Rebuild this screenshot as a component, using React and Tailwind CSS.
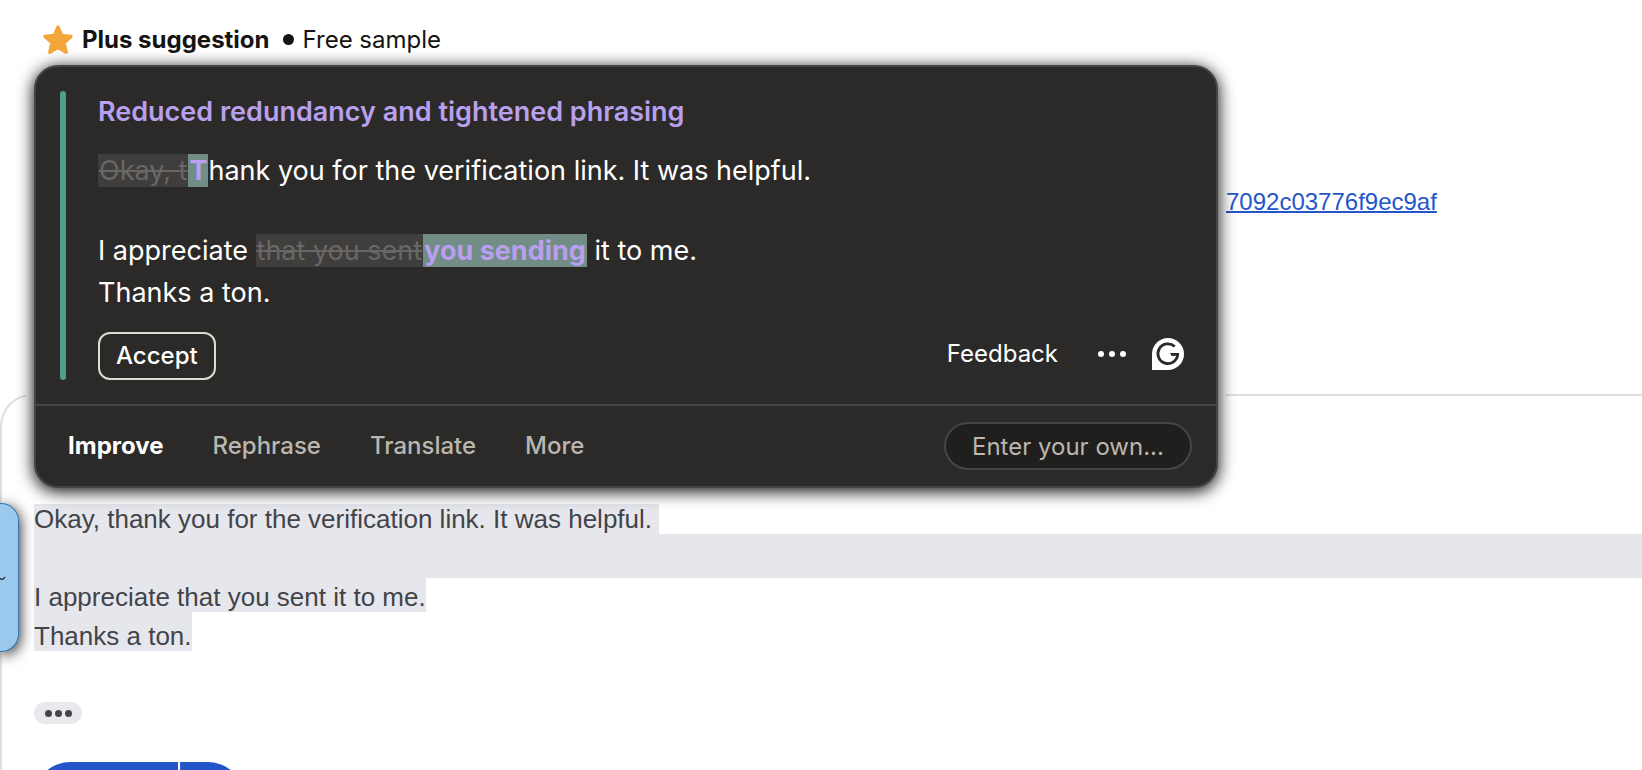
import React from "react";

const tabs = ["Improve", "Rephrase", "Translate", "More"];

const StarIcon = () => (
  <svg className="h-[30px] w-[30px]" viewBox="0 0 30 30" aria-hidden="true">
    <path
      d="M15 2 18.6 10.4 28 11.4 21 17.7 23.2 27.2 15 22.3 6.8 27.2 9 17.7 2 11.4 11.4 10.4Z"
      fill="#f3a63b"
      stroke="#f3a63b"
      strokeWidth="3.4"
      strokeLinejoin="round"
    />
  </svg>
);

const GrammarIcon = () => (
  <svg className="h-8 w-8" viewBox="0 0 32 32" aria-hidden="true">
    <path d="M16 0a16 16 0 1 1 0 32H0V16A16 16 0 0 1 16 0Z" fill="#fff" />
    <path
      d="M22.7 8.6A9.9 9.9 0 1 0 25.7 16.4H19"
      fill="none"
      stroke="#2b2a28"
      strokeWidth="2.8"
    />
    <path d="M20.6 15H17.8L20.2 17.8H22.6Z" fill="#2b2a28" />
  </svg>
);

const Dots = ({ className }) => (
  <span className={className}>
    <span className="rounded-full bg-current" />
    <span className="rounded-full bg-current" />
    <span className="rounded-full bg-current" />
  </span>
);

const Removed = ({ children }) => (
  <del className="bg-[#3f3e3c] px-px text-[#686765] decoration-2">
    {children}
  </del>
);

const Added = ({ children }) => (
  <ins className="bg-[#728c86] px-px font-bold text-[#b9a0ee] no-underline">
    {children}
  </ins>
);

const SuggestionCard = () => (
  <section className="rounded-[24px] border-2 border-[#464543] bg-[#2b2a28] text-white shadow-[0_3px_16px_1px_rgba(0,0,0,0.9)]">
    <div className="flex gap-8 px-6 pt-6 pb-6">
      <div className="w-[6px] shrink-0 rounded-full bg-[#519f8b]" />
      <div className="grow">
        <h2 className="text-[27px] leading-[42px] font-semibold text-[#b9a0ee]">
          Reduced redundancy and tightened phrasing
        </h2>
        <div className="mt-[17px] text-[27px] leading-[42px]">
          <p>
            <Removed>Okay, t</Removed>
            <Added>T</Added>hank you for the verification link. It was helpful.
          </p>
          <p className="mt-[38px]">
            I appreciate <Removed>that you sent</Removed>
            <Added>you sending</Added> it to me.
          </p>
          <p>Thanks a ton.</p>
        </div>
        <div className="mt-[18px] flex items-start justify-between">
          <button className="h-12 rounded-xl border-2 border-[#dddbd6] px-4 text-2xl font-medium">
            Accept
          </button>
          <div className="flex h-11 items-center pr-2">
            <button className="text-2xl">Feedback</button>
            <button aria-label="More options" className="ml-10">
              <Dots className="flex gap-[5px] *:h-[6px] *:w-[6px]" />
            </button>
            <button aria-label="Open assistant" className="ml-[26px]">
              <GrammarIcon />
            </button>
          </div>
        </div>
      </div>
    </div>
    <div className="flex items-center justify-between border-t-2 border-[#464543] py-4 pr-6 pl-8 text-2xl">
      <nav className="flex gap-[49px]">
        {tabs.map((tab, index) => (
          <button
            key={tab}
            className={
              index === 0 ? "font-bold text-white" : "font-medium text-[#bab7af]"
            }
          >
            {tab}
          </button>
        ))}
      </nav>
      <input
        type="text"
        aria-label="Enter your own prompt"
        placeholder="Enter your own..."
        className="h-12 w-[248px] rounded-full border-2 border-[#464543] bg-[#201f1d] px-[26px] placeholder:text-[#bab7af]"
      />
    </div>
  </section>
);

const App = () => {
  return (
    <div className="relative flex h-screen flex-col overflow-hidden bg-white font-['Liberation_Sans',Arial,sans-serif]">
      {/* Message above the reply box */}
      <div className="h-[394px] shrink-0 pt-[186px] pl-[1226px] text-2xl">
        <a href="#link" className="text-[#2456c9] underline decoration-2">
          7092c03776f9ec9af
        </a>
      </div>

      {/* Reply box */}
      <main className="grow rounded-tl-[32px] border-t-2 border-l-2 border-[#dfdfdf] pt-[108px] pl-8">
        <div className="text-[26px] leading-[30px] text-[#434449]">
          <p className="w-fit bg-[#e6e7ed] pr-[7px]">
            Okay, thank you for the verification link. It was helpful.
          </p>
          <div className="h-11 bg-[#e6e7ed]" />
          <p className="w-fit bg-[#e6e7ed] pt-1">
            I appreciate that you sent it to me.
          </p>
          <p className="w-fit bg-[#e6e7ed] pt-[9px]">Thanks a ton.</p>
        </div>
        <button
          aria-label="Show trimmed content"
          className="mt-[51px] flex h-[22px] w-12 items-center justify-center rounded-full bg-[#e8e9ed] text-[#434449]"
        >
          <Dots className="flex gap-[3px] *:h-[7px] *:w-[7px]" />
        </button>
        <div className="mt-[38px] flex gap-[2px]">
          <button
            aria-label="Send"
            className="h-[72px] w-36 rounded-l-full bg-[#2456c9]"
          />
          <button
            aria-label="More send options"
            className="h-[72px] w-16 rounded-r-full bg-[#2456c9]"
          />
        </div>
      </main>

      {/* Side tab peeking in from the left edge */}
      <div className="absolute top-[503px] left-0 flex h-[149px] w-[19px] items-center rounded-r-[18px] border border-l-0 border-[#3977ad] bg-[#9bc8ed] shadow-[1px_3px_14px_rgba(0,0,0,0.85)]">
        <svg className="h-2 w-[6px]" viewBox="0 0 6 8" aria-hidden="true">
          <path
            d="M0 4.5Q3 6.5 5 3"
            fill="none"
            stroke="#111"
            strokeWidth="1.2"
          />
        </svg>
      </div>

      {/* Floating suggestion popup */}
      <div className="absolute top-0 left-[26px] w-[1200px] bg-white px-2 pb-3 font-[Inter,sans-serif]">
        <header className="flex h-[65px] items-center pt-[14px] pl-[9px] text-2xl text-[#141414]">
          <StarIcon />
          <strong className="ml-[9px] font-bold">Plus suggestion</strong>
          <span className="mr-[9px] ml-[13px] h-[11px] w-[11px] rounded-full bg-[#141414]" />
          <span>Free sample</span>
        </header>
        <SuggestionCard />
      </div>
    </div>
  );
};

export default App;
